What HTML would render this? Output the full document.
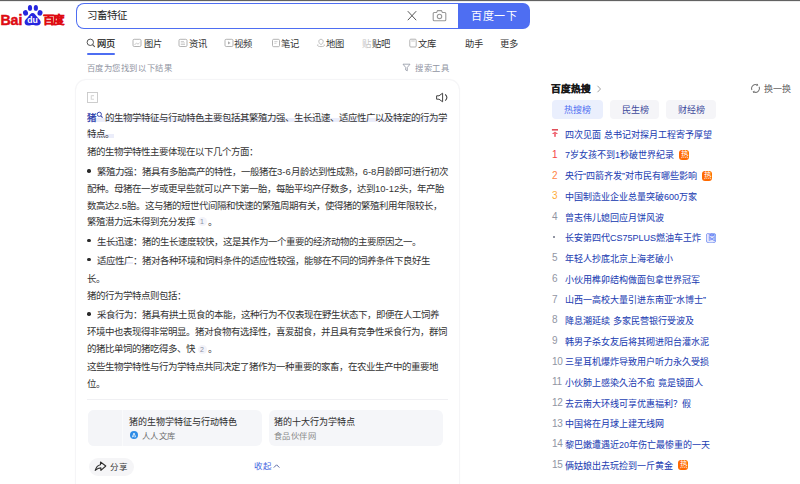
<!DOCTYPE html>
<html lang="zh-CN"><head><meta charset="utf-8">
<style>
html,body{margin:0;padding:0;background:#fff;}
body{width:800px;height:484px;overflow:hidden;position:relative;font-family:"Liberation Sans",sans-serif;color:#222;}
.t{position:absolute;font-size:9px;line-height:17px;white-space:nowrap;}
.body{font-size:9.45px;color:#333;}
.abs{position:absolute;}
.blue{color:#2a3caa;-webkit-text-stroke:0.25px #2a3caa;}
.hl{background:linear-gradient(to bottom, rgba(255,255,255,0) 55%, #ebedfa 55%, #ebedfa 95%, rgba(255,255,255,0) 95%);}
.sq{display:inline-block;width:9px;height:9px;position:relative;}
.cite{display:inline-block;font-size:7px;line-height:9px;height:9px;padding:0 2.6px;margin:0 1.5px 0 2.5px;color:#8a8fa3;background:#f3f3f9;border-radius:4.5px;vertical-align:0.5px;-webkit-text-stroke:0;}
.ul{background:linear-gradient(to bottom, rgba(255,255,255,0) 62%, #ebebf8 62%, #ebebf8 80%, rgba(255,255,255,0) 80%);}
.gray{color:#9195a3;-webkit-text-stroke:0;}
.hot .n{position:absolute;left:552px;font-size:9px;line-height:17px;color:#9195a3;}
.badge{display:inline-block;width:10px;height:10px;border-radius:3px;font-size:7.5px;line-height:10px;text-align:center;color:#fff;background:#ff6a00;vertical-align:1.5px;margin-left:5px;-webkit-text-stroke:0;}
.badge.ad{background:#e6ecfd;color:#4e6ef2;box-shadow:inset 0 0 0 0.6px #6b84f0;}
.link{color:#2440b3;-webkit-text-stroke:0.05px currentColor;}
</style></head><body>
<div class="abs" style="left:0;top:0;width:800px;height:1px;background:#626262"></div><div class="abs" style="left:0;top:1px;width:800px;height:1px;background:#ececec"></div>
<svg class="abs" style="left:0;top:0" width="70" height="30" viewBox="0 0 70 30">
<text x="0.4" y="24.8" font-family="Liberation Sans" font-weight="bold" font-size="14.6" fill="#de0b12" stroke="#de0b12" stroke-width="0.5" textLength="22" lengthAdjust="spacingAndGlyphs">Bai</text>
<ellipse cx="25.5" cy="12.9" rx="2.5" ry="2.8" fill="#2626de" transform="rotate(-15 25.5 12.9)"/>
<ellipse cx="30" cy="7.9" rx="2.1" ry="2.9" fill="#2626de"/>
<ellipse cx="35.85" cy="7.9" rx="2.1" ry="2.9" fill="#2626de"/>
<ellipse cx="40" cy="12.9" rx="2.5" ry="2.8" fill="#2626de" transform="rotate(15 40 12.9)"/>
<path d="M32.6 13 C30.6 13 29.8 15.2 28 17 C26 19 24.5 20.2 24.6 22.6 C24.7 24.6 26.3 25.7 28.4 25.6 C30.2 25.5 31.2 25 32.6 25 C34 25 35 25.5 36.8 25.6 C38.9 25.7 40.6 24.6 40.7 22.6 C40.8 20.2 39.2 19 37.2 17 C35.4 15.2 34.6 13 32.6 13 Z" fill="#2626de"/>
<text x="27.2" y="23" font-family="Liberation Sans" font-weight="bold" font-size="8.8" fill="#fff" textLength="10.6" lengthAdjust="spacingAndGlyphs">du</text>
</svg>
<div class="abs" style="left:42.5px;top:13px;font-size:11.5px;line-height:14px;font-weight:bold;color:#de0b12;letter-spacing:-0.4px;-webkit-text-stroke:0.45px #de0b12">百度</div>
<div class="abs" style="left:76px;top:3px;width:382px;height:24px;border:1.3px solid #4e6ef2;border-right:none;border-radius:8px 0 0 8px;box-sizing:content-box"></div>
<div class="abs" style="left:458px;top:3px;width:72px;height:26px;background:#4e6ef2;border-radius:0 7px 7px 0"></div>
<div class="t " style="left:86.5px;top:7.0px;font-size:10.49px;color:#1f1f1f;">习畜特征</div>
<div class="t " style="left:471px;top:8.0px;font-size:11px;color:#fff;letter-spacing:0.5px;-webkit-text-stroke:0;">百度一下</div>
<svg class="abs" style="left:406px;top:10px" width="12" height="12" viewBox="0 0 12 12"><path d="M1.8 1.2 L10.2 10.2 M10.2 1.2 L1.8 10.2" stroke="#555" stroke-width="1" fill="none"/></svg>
<svg class="abs" style="left:432px;top:9px" width="15" height="13" viewBox="0 0 15 13"><path d="M2.2 3.5 H4.6 L5.6 1.6 H9.4 L10.4 3.5 H12.8 Q13.8 3.5 13.8 4.5 V10.8 Q13.8 11.8 12.8 11.8 H2.2 Q1.2 11.8 1.2 10.8 V4.5 Q1.2 3.5 2.2 3.5 Z" stroke="#999" stroke-width="1.1" fill="none"/><circle cx="7.5" cy="7.4" r="2.2" stroke="#999" stroke-width="1.1" fill="none"/></svg>
<div class="t " style="left:97px;top:35.6px;font-size:9.3px;color:#222;-webkit-text-stroke:0.2px #222;">网页</div>
<div class="t " style="left:144px;top:35.6px;font-size:9.3px;color:#333;-webkit-text-stroke:0;">图片</div>
<div class="t " style="left:189px;top:35.6px;font-size:9.3px;color:#333;-webkit-text-stroke:0;">资讯</div>
<div class="t " style="left:234px;top:35.6px;font-size:9.3px;color:#333;-webkit-text-stroke:0;">视频</div>
<div class="t " style="left:281px;top:35.6px;font-size:9.3px;color:#333;-webkit-text-stroke:0;">笔记</div>
<div class="t " style="left:326px;top:35.6px;font-size:9.3px;color:#333;-webkit-text-stroke:0;">地图</div>
<div class="t " style="left:372px;top:35.6px;font-size:9.3px;color:#333;-webkit-text-stroke:0;">贴吧</div>
<div class="t " style="left:418px;top:35.6px;font-size:9.3px;color:#333;-webkit-text-stroke:0;">文库</div>
<div class="t " style="left:465px;top:35.6px;font-size:9.3px;color:#333;-webkit-text-stroke:0;">助手</div>
<div class="t " style="left:500px;top:35.6px;font-size:9.3px;color:#333;-webkit-text-stroke:0;">更多</div>
<div class="abs" style="left:87px;top:53px;width:28px;height:2px;background:#4e6ef2;border-radius:1px"></div>
<svg class="abs" style="left:86px;top:38px" width="10" height="10" viewBox="0 0 10 10"><circle cx="4.3" cy="4.3" r="3.2" stroke="#555" stroke-width="1" fill="none"/><path d="M6.6 6.6 L8.8 8.8" stroke="#555" stroke-width="1.1"/></svg>
<svg class="abs" style="left:132px;top:38px" width="10" height="10" viewBox="0 0 10 10"><rect x="1" y="1.3" width="8" height="7.2" rx="1.2" stroke="#aaa" stroke-width="0.9" fill="none"/><path d="M2.5 7 L4.5 5 L6 6.2 L7.5 4.8" stroke="#bbb" stroke-width="0.8" fill="none"/></svg>
<svg class="abs" style="left:178px;top:38px" width="10" height="10" viewBox="0 0 10 10"><rect x="1" y="1.3" width="8" height="7.2" rx="1.2" stroke="#aaa" stroke-width="0.9" fill="none"/><path d="M2.8 3.5 H6 M2.8 5 H7 M2.8 6.5 H7" stroke="#bbb" stroke-width="0.7"/></svg>
<svg class="abs" style="left:224px;top:38px" width="10" height="10" viewBox="0 0 10 10"><rect x="1" y="1.3" width="8" height="7.2" rx="1.2" stroke="#aaa" stroke-width="0.9" fill="none"/><path d="M4 3.3 L6.5 4.9 L4 6.5 Z" fill="#aaa"/></svg>
<svg class="abs" style="left:271px;top:38px" width="10" height="10" viewBox="0 0 10 10"><rect x="1.5" y="1.3" width="7" height="7.4" rx="1.2" stroke="#aaa" stroke-width="0.9" fill="none"/><path d="M3.3 3.6 H6.5 M3.3 5.3 H5.5" stroke="#bbb" stroke-width="0.7"/></svg>
<svg class="abs" style="left:316px;top:38px" width="10" height="10" viewBox="0 0 10 10"><path d="M5 1.3 C3.6 1.3 2.8 2.3 2.8 3.5 C2.8 5 5 6.8 5 6.8 C5 6.8 7.2 5 7.2 3.5 C7.2 2.3 6.4 1.3 5 1.3 Z" stroke="#b5b5b5" stroke-width="0.9" fill="none"/><path d="M2.2 6.3 C0.8 7 1.4 8.6 5 8.6 C8.6 8.6 9.2 7 7.8 6.3" stroke="#b5b5b5" stroke-width="0.9" fill="none"/></svg>
<div class="abs" style="left:361.5px;top:35.6px;font-size:9.3px;line-height:17px;color:#c4c4c4">贴</div>
<svg class="abs" style="left:408px;top:38px" width="10" height="10" viewBox="0 0 10 10"><rect x="1.8" y="1.2" width="6.4" height="7.8" rx="1" stroke="#aaa" stroke-width="0.9" fill="none"/><path d="M3.2 3 H6.8" stroke="#bbb" stroke-width="0.8"/></svg>
<div class="t gray" style="left:86.5px;top:59.5px;font-size:8.3px;letter-spacing:0.6px;">百度为您找到以下结果</div>
<svg class="abs" style="left:402px;top:63px" width="9" height="9" viewBox="0 0 9 9"><path d="M1 1.2 H8 L5.3 4.5 V7.8 L3.7 7 V4.5 Z" stroke="#9195a3" stroke-width="0.8" fill="none"/></svg>
<div class="t gray" style="left:415px;top:60.0px;font-size:8.3px;letter-spacing:0.6px;">搜索工具</div>
<div class="abs" style="left:76px;top:80px;width:383px;height:430px;border-radius:10px;box-shadow:0 0 0 1px #f5f5f7, 0 0 3px rgba(0,0,0,0.045);"></div>
<svg class="abs" style="left:86px;top:91px" width="13" height="13" viewBox="0 0 13 13"><rect x="1.5" y="1.5" width="10" height="10" stroke="#c8c8c8" stroke-width="0.9" fill="none"/><path d="M5.3 4.6 H8 M5.3 4.6 V8.3 H8" stroke="#d8d8d8" stroke-width="1.1" fill="none"/></svg>
<svg class="abs" style="left:435px;top:92px" width="15" height="11" viewBox="0 0 15 11"><path d="M1.6 3.8 H4 L7.6 1.2 V9.8 L4 7.2 H1.6 Z" stroke="#444" stroke-width="1" fill="none" stroke-linejoin="round"/><path d="M10.2 2.3 Q13.6 5.5 10.2 8.7" stroke="#444" stroke-width="1.1" fill="none"/></svg>
<div class="t body" style="left:87px;top:108.5px;"><span class="hl"><span class="blue">猪</span><span class="sq"></span>的生物学特征与行动特色主要包括其繁殖力强、生长迅速、适应性广以及特定的行为学</span></div>
<div class="t body" style="left:87px;top:125px;"><span class="hl">特点。</span></div>
<div class="t body" style="left:87px;top:143.2px;">猪的生物学特性主要体现在以下几个方面：</div>
<div class="t body" style="left:97px;top:163.2px;"><span class="ul">繁殖力强</span>：猪具有多胎高产的特性，一般猪在3-6月龄达到性成熟，6-8月龄即可进行初次</div>
<div class="t body" style="left:87px;top:179.9px;">配种。母猪在一岁或更早些就可以产下第一胎，每胎平均产仔数多，达到10-12头，年产胎</div>
<div class="t body" style="left:87px;top:196.6px;">数高达2.5胎。这与猪的短世代间隔和快速的繁殖周期有关，使得猪的繁殖利用年限较长，</div>
<div class="t body" style="left:87px;top:212.5px;">繁殖潜力远未得到充分发挥<span class="cite">1</span>。</div>
<div class="t body" style="left:97px;top:232.5px;"><span class="ul">生长迅速</span>：猪的生长速度较快，这是其作为一个重要的经济动物的主要原因之一。</div>
<div class="t body" style="left:97px;top:252px;"><span class="ul">适应性广</span>：猪对各种环境和饲料条件的适应性较强，能够在不同的饲养条件下良好生</div>
<div class="t body" style="left:87px;top:269.5px;">长。</div>
<div class="t body" style="left:87px;top:287px;">猪的行为学特点则包括：</div>
<div class="t body" style="left:97px;top:306.2px;"><span class="ul">采食行为</span>：猪具有拱土觅食的本能，这种行为不仅表现在野生状态下，即便在人工饲养</div>
<div class="t body" style="left:87px;top:323px;">环境中也表现得非常明显。猪对食物有选择性，喜爱甜食，并且具有竞争性采食行为，群饲</div>
<div class="t body" style="left:87px;top:340.2px;">的猪比单饲的猪吃得多、快<span class="cite">2</span>。</div>
<div class="t body" style="left:87px;top:358px;">这些生物学特性与行为学特点共同决定了猪作为一种重要的家畜，在农业生产中的重要地</div>
<div class="t body" style="left:87px;top:375px;">位。</div>
<div class="abs" style="left:87.3px;top:169.2px;width:3.4px;height:3.4px;border-radius:50%;background:#2a2a2a"></div>
<div class="abs" style="left:87.3px;top:238.5px;width:3.4px;height:3.4px;border-radius:50%;background:#2a2a2a"></div>
<div class="abs" style="left:87.3px;top:258px;width:3.4px;height:3.4px;border-radius:50%;background:#2a2a2a"></div>
<div class="abs" style="left:87.3px;top:312.2px;width:3.4px;height:3.4px;border-radius:50%;background:#2a2a2a"></div>
<svg class="abs" style="left:96px;top:111px" width="8" height="8" viewBox="0 0 8 8"><circle cx="3.3" cy="3.3" r="2.1" stroke="#3b4bb0" stroke-width="1" fill="none"/><path d="M4.8 4.8 L6.6 6.6" stroke="#3b4bb0" stroke-width="1.1"/></svg>
<div class="abs" style="left:87px;top:399px;width:361px;height:1px;background:#f0f0f3"></div>
<div class="abs" style="left:87.5px;top:409.5px;width:174.5px;height:36.5px;background:#f5f6f9;border-radius:6px;overflow:hidden"><div class="abs" style="left:0;top:0;width:34.5px;height:37px;background:#f4f5f8;border-right:1px solid #fafbfc"></div></div>
<div class="abs" style="left:268.5px;top:409.5px;width:174.5px;height:36.5px;background:#f5f6f9;border-radius:6px"></div>
<div class="t " style="left:129px;top:413.7px;color:#333;-webkit-text-stroke:0.05px #333;">猪的生物学特征与行动特色</div>
<div class="abs" style="left:130px;top:431px;width:8px;height:8px;border-radius:50%;background:#2e8ce6"></div>
<svg class="abs" style="left:130px;top:431px" width="8" height="8" viewBox="0 0 8 8"><path d="M2.3 6.3 L4 2 L5.7 6.3 M3.3 4.6 L4.3 6.3" stroke="#fff" stroke-width="0.8" fill="none"/></svg>
<div class="t " style="left:142px;top:427.7px;color:#6e6e6e;font-size:8.3px;letter-spacing:0.3px;-webkit-text-stroke:0;">人人文库</div>
<div class="t " style="left:274px;top:413.7px;color:#333;-webkit-text-stroke:0.05px #333;">猪的十大行为学特点</div>
<div class="t " style="left:274px;top:427.5px;color:#8a8a8a;font-size:8.3px;letter-spacing:0.4px;-webkit-text-stroke:0;">食品伙伴网</div>
<div class="abs" style="left:88.5px;top:457.5px;width:45px;height:18.5px;border-radius:9px;background:#f5f5f7"></div>
<svg class="abs" style="left:92px;top:458px" width="18" height="16" viewBox="0 0 18 16"><path d="M3.2 12.4 C4.2 9 6 7.1 8.5 6.7 V4 L13.8 8 L8.9 12.4 V9.9 C6.6 9.9 4.9 10.9 3.2 12.4 Z" stroke="#2f2f2f" stroke-width="1.1" fill="none" stroke-linejoin="round"/></svg><div class="t " style="left:110px;top:459px;font-size:8.5px;color:#3a3a3a;-webkit-text-stroke:0;">分享</div>
<div class="t " style="left:254px;top:458px;font-size:8.5px;color:#4565e0;-webkit-text-stroke:0;">收起</div>
<svg class="abs" style="left:272px;top:462px" width="9" height="8" viewBox="0 0 9 8"><path d="M1.8 5.6 L4.6 2.8 L7.4 5.6" stroke="#4a5a9a" stroke-width="0.9" fill="none"/></svg>
<div class="t " style="left:551px;top:79.5px;font-size:9.6px;font-weight:bold;color:#1a1a1a;-webkit-text-stroke:0.3px #1a1a1a;">百度热搜</div>
<svg class="abs" style="left:594.5px;top:84px" width="8" height="10" viewBox="0 0 8 10"><path d="M2.5 1.8 L5.5 5 L2.5 8.2" stroke="#999" stroke-width="0.9" fill="none"/></svg>
<svg class="abs" style="left:750px;top:82.5px" width="11" height="11" viewBox="0 0 11 11"><path d="M9.03 3.75 A3.9 3.9 0 0 1 3.55 8.78 M1.97 7.05 A3.9 3.9 0 0 1 7.45 2.02" stroke="#777" stroke-width="1.05" fill="none"/><path d="M7.15 0.82 L7.85 2.22 L6.35 2.62" stroke="#777" stroke-width="0.9" fill="none"/><path d="M3.85 9.98 L3.15 8.58 L4.65 8.18" stroke="#777" stroke-width="0.9" fill="none"/></svg>
<div class="t " style="left:763.5px;top:81px;font-size:9px;color:#666;">换一换</div>
<div class="abs" style="left:552px;top:100px;width:51px;height:18.5px;background:#eaeffd;border-radius:4px;"></div>
<div class="t " style="left:564.3px;top:102px;color:#4e6ef2;">热搜榜</div>
<div class="abs" style="left:610px;top:100px;width:49px;height:18.5px;background:#f5f5f8;border-radius:4px;"></div>
<div class="t " style="left:622.3px;top:102px;color:#3d4a9c;">民生榜</div>
<div class="abs" style="left:665.5px;top:100px;width:50.5px;height:18.5px;background:#f5f5f8;border-radius:4px;"></div>
<div class="t " style="left:677.8px;top:102px;color:#3d4a9c;">财经榜</div>
<svg class="abs" style="left:548px;top:125.80000000000001px" width="14" height="14" viewBox="0 0 14 14"><rect x="3.9" y="3" width="6.1" height="1.6" fill="#e0505a"/><path d="M7 5.6 L10.1 8 H3.8 Z" fill="#ee6470"/><rect x="6" y="7.4" width="2" height="3.4" fill="#f27a86"/></svg><div class="t link" style="left:565px;top:126.80000000000001px;">四次见面 总书记对探月工程寄予厚望</div>
<div class="t " style="left:552px;top:145.88000000000002px;color:#f54545;font-size:10px;letter-spacing:-0.4px;-webkit-text-stroke:0;">1</div>
<div class="t link" style="left:565px;top:147.48000000000002px;">7岁女孩不到1秒破世界纪录<span class="badge">热</span></div>
<div class="t " style="left:552px;top:166.56000000000003px;color:#ff8547;font-size:10px;letter-spacing:-0.4px;-webkit-text-stroke:0;">2</div>
<div class="t link" style="left:565px;top:168.16000000000003px;">央行“四箭齐发”对市民有哪些影响<span class="badge">热</span></div>
<div class="t " style="left:552px;top:187.24px;color:#ffac38;font-size:10px;letter-spacing:-0.4px;-webkit-text-stroke:0;">3</div>
<div class="t link" style="left:565px;top:188.84px;">中国制造业企业总量突破600万家</div>
<div class="t " style="left:552px;top:207.92000000000002px;color:#9195a3;font-size:10px;letter-spacing:-0.4px;-webkit-text-stroke:0;">4</div>
<div class="t link" style="left:565px;top:209.52px;">曾志伟儿媳回应月饼风波</div>
<div class="abs" style="left:552.5px;top:236.4px;width:2px;height:2px;background:#9195a3"></div>
<div class="t link" style="left:565px;top:230.20000000000002px;">长安第四代CS75PLUS燃油车王炸<span class="badge ad">商</span></div>
<div class="t " style="left:552px;top:249.28px;color:#9195a3;font-size:10px;letter-spacing:-0.4px;-webkit-text-stroke:0;">5</div>
<div class="t link" style="left:565px;top:250.88px;">年轻人抄底北京上海老破小</div>
<div class="t " style="left:552px;top:269.96px;color:#9195a3;font-size:10px;letter-spacing:-0.4px;-webkit-text-stroke:0;">6</div>
<div class="t link" style="left:565px;top:271.56px;">小伙用榫卯结构做面包拿世界冠军</div>
<div class="t " style="left:552px;top:290.64px;color:#9195a3;font-size:10px;letter-spacing:-0.4px;-webkit-text-stroke:0;">7</div>
<div class="t link" style="left:565px;top:292.24px;">山西一高校大量引进东南亚“水博士”</div>
<div class="t " style="left:552px;top:311.32px;color:#9195a3;font-size:10px;letter-spacing:-0.4px;-webkit-text-stroke:0;">8</div>
<div class="t link" style="left:565px;top:312.92px;">降息潮延续 多家民营银行受波及</div>
<div class="t " style="left:552px;top:332.0px;color:#9195a3;font-size:10px;letter-spacing:-0.4px;-webkit-text-stroke:0;">9</div>
<div class="t link" style="left:565px;top:333.6px;">韩男子杀女友后将其砌进阳台灌水泥</div>
<div class="t " style="left:552px;top:352.67999999999995px;color:#9195a3;font-size:10px;letter-spacing:-0.4px;-webkit-text-stroke:0;">10</div>
<div class="t link" style="left:565px;top:354.28px;">三星耳机爆炸导致用户听力永久受损</div>
<div class="t " style="left:552px;top:373.36px;color:#9195a3;font-size:10px;letter-spacing:-0.4px;-webkit-text-stroke:0;">11</div>
<div class="t link" style="left:565px;top:374.96000000000004px;">小伙肺上感染久治不愈 竟是镜面人</div>
<div class="t " style="left:552px;top:394.03999999999996px;color:#9195a3;font-size:10px;letter-spacing:-0.4px;-webkit-text-stroke:0;">12</div>
<div class="t link" style="left:565px;top:395.64px;">去云南大环线可享优惠福利？假</div>
<div class="t " style="left:552px;top:414.71999999999997px;color:#9195a3;font-size:10px;letter-spacing:-0.4px;-webkit-text-stroke:0;">13</div>
<div class="t link" style="left:565px;top:416.32px;">中国将在月球上建无线网</div>
<div class="t " style="left:552px;top:435.4px;color:#9195a3;font-size:10px;letter-spacing:-0.4px;-webkit-text-stroke:0;">14</div>
<div class="t link" style="left:565px;top:437.0px;">黎巴嫩遭遇近20年伤亡最惨重的一天</div>
<div class="t " style="left:552px;top:456.08px;color:#9195a3;font-size:10px;letter-spacing:-0.4px;-webkit-text-stroke:0;">15</div>
<div class="t link" style="left:565px;top:457.68px;">俩姑娘出去玩捡到一斤黄金<span class="badge">热</span></div>
</body></html>
